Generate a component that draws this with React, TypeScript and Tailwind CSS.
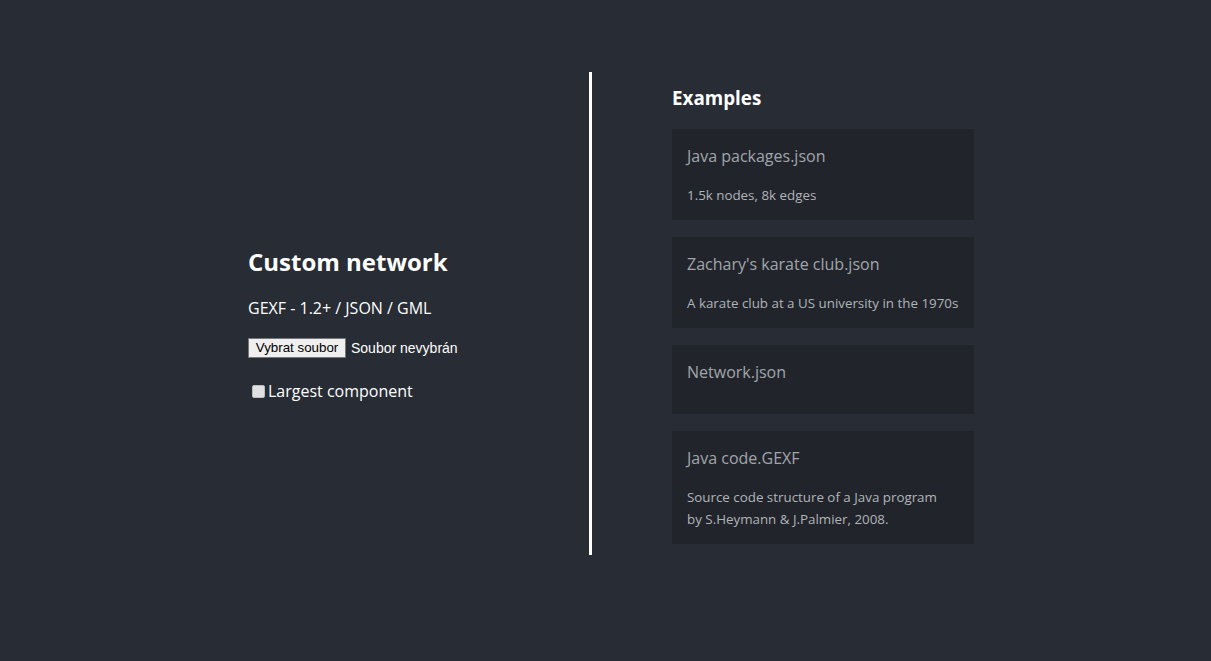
import React from "react";

const examples = [
  { title: "Java packages.json", desc: ["1.5k nodes, 8k edges"] },
  { title: "Zachary's karate club.json", desc: ["A karate club at a US university in the 1970s"] },
  { title: "Network.json", desc: [] as string[] },
  {
    title: "Java code.GEXF",
    desc: ["Source code structure of a Java program", "by S.Heymann & J.Palmier, 2008."],
  },
];

export default function App() {
  return (
    <div
      className="flex h-[661px] w-full bg-[#282c34] pl-[248px]"
      style={{ fontFamily: '"Open Sans", "Noto Sans", sans-serif' }}
    >
      <div className="w-[341px] pt-[246px] text-white">
        <h2 className="text-[24px] font-bold leading-[32px]">Custom network</h2>
        <p className="mt-[18px] text-[16px] leading-[24px]">GEXF - 1.2+ / JSON / GML</p>
        <div
          className="mt-[18px] flex h-[20px] items-center leading-[18px]"
          style={{ fontFamily: '"Liberation Sans", Arial, sans-serif' }}
        >
          <span className="flex h-[20px] w-[98px] items-center justify-center border border-[#767676] bg-[#efefef] text-[13.33px] text-black">
            Vybrat soubor
          </span>
          <span className="ml-[5px] text-[14px] text-white">Soubor nevybrán</span>
        </div>
        <label className="mt-[21px] flex items-center text-[16px] leading-[24px]">
          <span className="ml-[4px] mr-[3px] inline-block h-[13px] w-[13px] rounded-[2px] border border-[#bdbdbd] bg-[#e0e0e0]" />
          Largest component
        </label>
      </div>
      <div className="mt-[72px] h-[483px] w-[3px] bg-white" />
      <div className="pl-[80px] pt-[85px]">
        <h3 className="text-[18.8px] font-bold leading-[26px] text-white">Examples</h3>
        <div className="mt-[18px] flex w-[302px] flex-col gap-[17px]">
          {examples.map((e) => (
            <div key={e.title} className="bg-[#21252b] px-[15px] pb-[14px] pt-[16px]">
              <div className="text-[16px] leading-[22px] text-[#a2a5ab]">{e.title}</div>
              <div className="mt-[17px] text-[13.35px] leading-[22px] text-[#b1b4b9]">
                {e.desc.map((d) => (
                  <div key={d}>{d}</div>
                ))}
              </div>
            </div>
          ))}
        </div>
      </div>
    </div>
  );
}
